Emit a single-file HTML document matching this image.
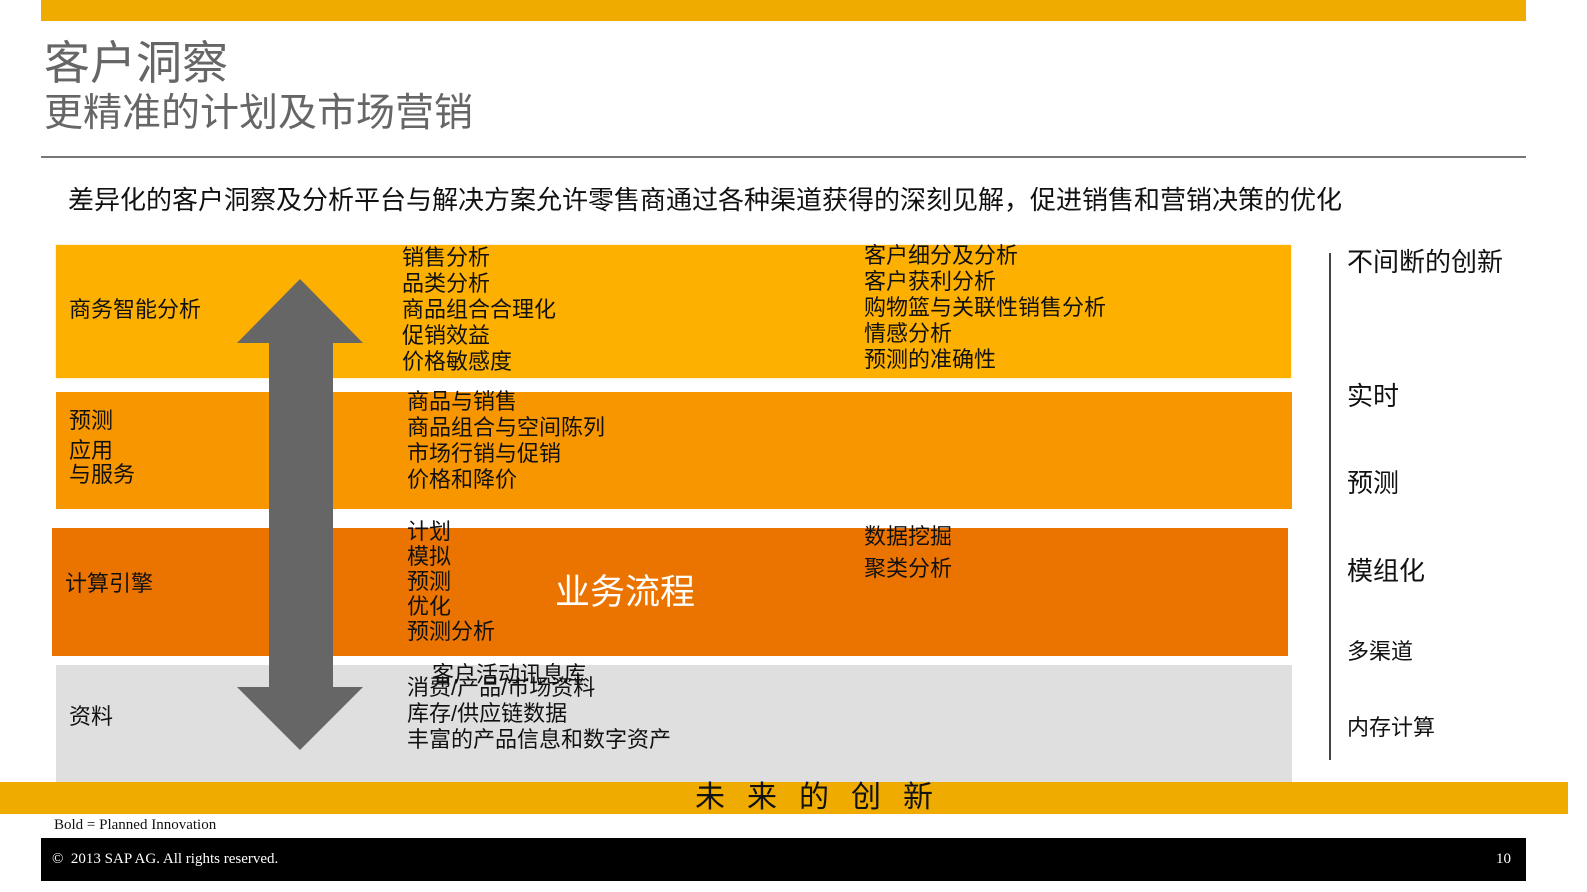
<!DOCTYPE html><html><head><meta charset="utf-8"><style>
body{margin:0;width:1587px;height:892px;position:relative;background:#fff;font-family:"Liberation Sans","Noto Sans CJK SC",sans-serif;overflow:hidden}
.a{position:absolute}
.t{position:absolute;font-size:22px;line-height:26px;color:#111;white-space:nowrap}
</style></head><body>
<div class="a" style="left:41px;top:0;width:1485px;height:21px;background:#F0AB00"></div>
<div class="a" style="left:44px;top:35px;font-size:46px;color:#666;line-height:56px">客户洞察</div>
<div class="a" style="left:44px;top:89px;font-size:39px;color:#666;line-height:50px">更精准的计划及市场营销</div>
<div class="a" style="left:41px;top:156px;width:1485px;height:2px;background:#777"></div>
<div class="a" style="left:68px;top:184px;font-size:26px;line-height:32px;color:#111;white-space:nowrap">差异化的客户洞察及分析平台与解决方案允许零售商通过各种渠道获得的深刻见解，促进销售和营销决策的优化</div>
<div class="a" style="left:56px;top:245px;width:1235px;height:133px;background:#FDB000;box-shadow:0 0 2px #fcd98a"></div>
<div class="a" style="left:56px;top:392px;width:1236px;height:117px;background:#F89600"></div>
<div class="a" style="left:52px;top:528px;width:1236px;height:128px;background:#EB7400"></div>
<div class="a" style="left:56px;top:665px;width:1236px;height:117px;background:#DFDFDF"></div>
<div class="a" style="left:0;top:782px;width:1568px;height:32px;background:#F0AB00"></div>
<div class="a" style="left:695px;top:780px;font-size:30px;line-height:36px;letter-spacing:22px;color:#111">未来的创新</div>
<svg class="a" style="left:0;top:0" width="1587" height="892"><polygon points="300,279 363,343 333,343 333,687 363,687 300,750 237,687 269,687 269,343 237,343" fill="#666"/></svg>
<div class="t" style="left:69px;top:297px">商务智能分析</div>
<div class="t" style="left:402px;top:245px">销售分析<br>品类分析<br>商品组合合理化<br>促销效益<br>价格敏感度</div>
<div class="t" style="left:864px;top:243px">客户细分及分析<br>客户获利分析<br>购物篮与关联性销售分析<br>情感分析<br>预测的准确性</div>
<div class="t" style="left:69px;top:406px;line-height:30px">预测<br>应用<br><span style="position:relative;top:-6px">与服务</span></div>
<div class="t" style="left:407px;top:389px">商品与销售<br>商品组合与空间陈列<br>市场行销与促销<br>价格和降价</div>
<div class="t" style="left:65px;top:571px">计算引擎</div>
<div class="t" style="left:407px;top:519px;line-height:25px">计划<br>模拟<br>预测<br>优化<br>预测分析</div>
<div class="t" style="left:864px;top:521px;line-height:32px">数据挖掘<br>聚类分析</div>
<div class="a" style="left:555px;top:572px;font-size:35px;color:#fff;line-height:42px">业务流程</div>
<div class="t" style="left:69px;top:704px">资料</div>
<div class="t" style="left:432px;top:662px">客户活动讯息库</div>
<div class="t" style="left:407px;top:675px">消费/产品/市场资料<br>库存/供应链数据<br>丰富的产品信息和数字资产</div>
<div class="a" style="left:1329px;top:253px;width:2px;height:507px;background:#444"></div>
<div class="t" style="left:1347px;top:247px;font-size:26px;line-height:30px">不间断的创新</div>
<div class="t" style="left:1347px;top:381px;font-size:26px;line-height:30px">实时</div>
<div class="t" style="left:1347px;top:468px;font-size:26px;line-height:30px">预测</div>
<div class="t" style="left:1347px;top:556px;font-size:26px;line-height:30px">模组化</div>
<div class="t" style="left:1347px;top:639px">多渠道</div>
<div class="t" style="left:1347px;top:715px">内存计算</div>
<div class="a" style="left:54px;top:817px;font-family:'Liberation Serif',serif;font-size:15px;color:#111">Bold = Planned Innovation</div>
<div class="a" style="left:41px;top:838px;width:1485px;height:43px;background:#000"></div>
<div class="a" style="left:52px;top:851px;font-family:'Liberation Serif',serif;font-size:15px;color:#fff">©&nbsp; 2013 SAP AG. All rights reserved.</div>
<div class="a" style="left:1496px;top:851px;font-family:'Liberation Serif',serif;font-size:15px;color:#fff">10</div>
</body></html>
